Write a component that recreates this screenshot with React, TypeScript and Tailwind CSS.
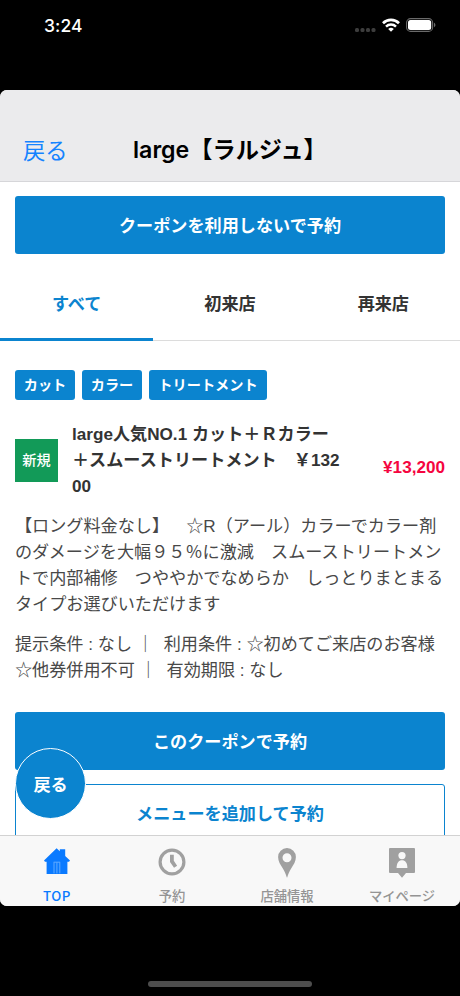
import React from "react";

const tags = [
  { label: "カット", width: "w-[60px]" },
  { label: "カラー", width: "w-[60px]" },
  { label: "トリートメント", width: "w-[118px]" },
];

const HomeIcon = () => (
  <svg width="26" height="26" viewBox="0 0 26 26" fill="#0a7aff">
    <path d="M0 12.600 12.600.2l3.200 3V1.200h5.400v6.800l4.800 4.600-1 1.200h-1.600V26H2.600V13.800H1z" />
    <path d="M10 14.400v11M12.900 14.400v11M15.800 14.400v11M9.600 14.200h6.600" stroke="#6bb0ff" strokeWidth="0.9" fill="none" />
  </svg>
);

const ClockIcon = () => (
  <svg width="28" height="28" viewBox="0 0 28 28" fill="none" stroke="#a0a0a0">
    <circle cx="14" cy="14" r="11.9" strokeWidth="3.2" />
    <path d="M13.900 6.800v6.600l3.700 5.400" strokeWidth="3.800" />
  </svg>
);

const PinIcon = () => (
  <svg width="18" height="30" viewBox="0 0 18 30" fill="#a0a0a0">
    <path
      fillRule="evenodd"
      d="M9 0a8.9 8.9 0 0 1 8.9 9c0 4.3-2.3 7.7-4.6 11.2C11.400 23.300 10.200 25.800 9.200 29.500h-.4c-1-3.700-2.200-6.200-4.100-9.300C2.400 16.700.1 13.300.1 9A8.900 8.900 0 0 1 9 0zm0 5.200a4.500 4.500 0 1 0 0 9 4.500 4.500 0 0 0 0-9z"
    />
  </svg>
);

const MyPageIcon = () => (
  <svg width="26" height="30" viewBox="0 0 26 30">
    <path d="M1 0h24a1 1 0 0 1 1 1v23a1 1 0 0 1-1 1h-8l-4 4.800L9 25H1a1 1 0 0 1-1-1V1a1 1 0 0 1 1-1z" fill="#a0a0a0" />
    <circle cx="13" cy="7.600" r="3.600" fill="#f8f8f8" />
    <path d="M7.600 20c0-5.200 2.200-7.700 5.400-7.700s5.400 2.500 5.400 7.700z" fill="#f8f8f8" />
  </svg>
);

const navItems = [
  { id: "top", label: "TOP", icon: <HomeIcon />, active: true },
  { id: "reserve", label: "予約", icon: <ClockIcon />, active: false },
  { id: "shop", label: "店舗情報", icon: <PinIcon />, active: false },
  { id: "mypage", label: "マイページ", icon: <MyPageIcon />, active: false },
];

const StatusBar = () => (
  <div className="flex h-[90px] shrink-0 items-start justify-between pl-[44px] pr-[24px] pt-[15px]">
    <span className="font-['Inter'] text-[17.5px] font-medium leading-[22px] tracking-[0.1px] text-white">
      3:24
    </span>
    <div className="flex items-start pt-[3px]">
      <svg className="mt-[10px]" width="21" height="4" viewBox="0 0 21 4" fill="#3d3d3d">
        <rect x="0" y="0" width="4" height="4" rx="1.500" />
        <rect x="5.500" y="0" width="4" height="4" rx="1.500" />
        <rect x="11" y="0" width="4" height="4" rx="1.500" />
        <rect x="16.500" y="0" width="4" height="4" rx="1.500" />
      </svg>
      <svg className="ml-[6px]" width="18" height="14" viewBox="0 0 18 14" fill="none" stroke="#fff">
        <path d="M1 5.200a11.400 11.400 0 0 1 16 0" strokeWidth="2.700" />
        <path d="M4 8.600a7.200 7.200 0 0 1 10 0" strokeWidth="2.500" />
        <path d="M9 13.800 6.200 11a4 4 0 0 1 5.600 0z" fill="#fff" stroke="none" />
      </svg>
      <svg className="ml-[6px]" width="30" height="14" viewBox="0 0 30 14">
        <rect x="0.600" y="0.600" width="26" height="12.800" rx="4" fill="none" stroke="#6a6a6a" strokeWidth="1.100" />
        <rect x="2" y="2" width="23.200" height="10" rx="2.500" fill="#fff" />
        <path d="M28 4.800v4.400c.900-.4 1.400-1.200 1.400-2.200s-.5-1.800-1.400-2.200z" fill="#6a6a6a" />
      </svg>
    </div>
  </div>
);

const App = () => {
  return (
    <div className="flex h-[996px] w-[460px] flex-col overflow-hidden bg-black font-['Liberation_Sans','Noto_Sans_CJK_JP',sans-serif] text-[17.14px] [text-spacing-trim:space-all]">
      <StatusBar />

      <div className="flex h-[816px] shrink-0 flex-col overflow-hidden rounded-[7px] bg-white">
        <header className="flex h-[92px] shrink-0 border-b border-[#d6d6d9] bg-[#ebebed] pl-[23px] pt-[44px]">
          <span className="w-[110px] whitespace-nowrap text-[22.3px] leading-[35px] text-[#1583ff]">
            戻る
          </span>
          <h1 className="whitespace-nowrap font-['Inter','Noto_Sans_CJK_JP',sans-serif] text-[23.200px] font-semibold leading-[33px] text-black">
            large【ラルジュ】
          </h1>
        </header>

        <main className="relative flex h-[653px] shrink-0 flex-col">
          <div className="flex grow flex-col overflow-hidden">
            <div className="px-[15px] pt-[14px]">
              <button className="h-[58px] w-full rounded-[3px] bg-[#0b84cf] pt-[3px] font-bold text-white">
                クーポンを利用しないで予約
              </button>
            </div>

            <div className="mt-[13px] grid h-[74px] shrink-0 grid-cols-3 border-b border-[#dcdcdc] font-bold leading-[74px] text-[#333]">
              <div className="h-[74px] border-b-[3px] border-[#0b84cf] text-center text-[#0b84cf]">
                すべて
              </div>
              <div className="text-center">初来店</div>
              <div className="text-center">再来店</div>
            </div>

            <div className="flex flex-col px-[15px] pt-[29px]">
              <div className="flex gap-[7px]">
                {tags.map((tag) => (
                  <span
                    key={tag.label}
                    className={`${tag.width} h-[30px] rounded-[3px] bg-[#0b84cf] text-center text-[14.2px] font-bold leading-[30px] text-white`}
                  >
                    {tag.label}
                  </span>
                ))}
              </div>

              <div className="mt-[21px] flex items-center whitespace-nowrap">
                <span className="h-[43px] w-[43px] bg-[#129a58] text-center text-[14.2px] font-medium leading-[42px] text-white">
                  新規
                </span>
                <h2 className="ml-[14px] grow font-bold leading-[26px] text-[#333]">
                  large人気NO.1 カット＋Ｒカラー
                  <br />
                  ＋スムーストリートメント　￥132
                  <br />
                  00
                </h2>
                <span className="pt-[16px] font-bold text-[#f5053f]">¥13,200</span>
              </div>

              <p className="mt-[14px] whitespace-nowrap leading-[26px] text-[#484848]">
                【ロング料金なし】　☆R（アール）カラーでカラー剤
                <br />
                のダメージを大幅９５％に激減　スムーストリートメン
                <br />
                トで内部補修　つややかでなめらか　しっとりまとまる
                <br />
                タイプお選びいただけます
              </p>

              <p className="mt-[14px] whitespace-nowrap leading-[26px] text-[#484848]">
                提示条件 : なし ｜ <span className="ml-[5px]">利用条件 : ☆初めてご来店のお客様</span>
                <br />
                ☆他券併用不可 ｜ <span className="ml-[5px]">有効期限 : なし</span>
              </p>

              <button className="mt-[29px] h-[58px] shrink-0 rounded-[3px] bg-[#0b84cf] pt-[3px] font-bold text-white">
                このクーポンで予約
              </button>
              <button className="mt-[14px] h-[58px] shrink-0 rounded-[3px] border border-[#0b84cf] pt-[3px] font-bold text-[#0b84cf]">
                メニューを追加して予約
              </button>
            </div>
          </div>

          {/* 戻るボタン */}
          <button className="absolute left-[15px] top-[566px] h-[71px] w-[71px] rounded-full border border-white bg-[#0b84cf] pt-[4px] font-bold text-white">
            戻る
          </button>
        </main>

        <nav className="grid h-[71px] shrink-0 grid-cols-4 border-t border-[#d2d2d2] bg-[#f8f8f8]">
          {navItems.map((item) => (
            <div key={item.id} className="flex flex-col items-center pr-[1px] pt-[12px]">
              <div className="h-[38px]">{item.icon}</div>
              <span
                className={`whitespace-nowrap font-['Noto_Sans_CJK_JP',sans-serif] text-[13.300px] font-medium leading-[19px] ${
                  item.active ? "tracking-[0.5px] text-[#0a7aff]" : "text-[#949494]"
                }`}
              >
                {item.label}
              </span>
            </div>
          ))}
        </nav>
      </div>

      <div className="mt-[75px] flex justify-center">
        <div className="h-[6px] w-[164px] rounded-full bg-[#4d4d4d]"></div>
      </div>
    </div>
  );
};

export default App;
